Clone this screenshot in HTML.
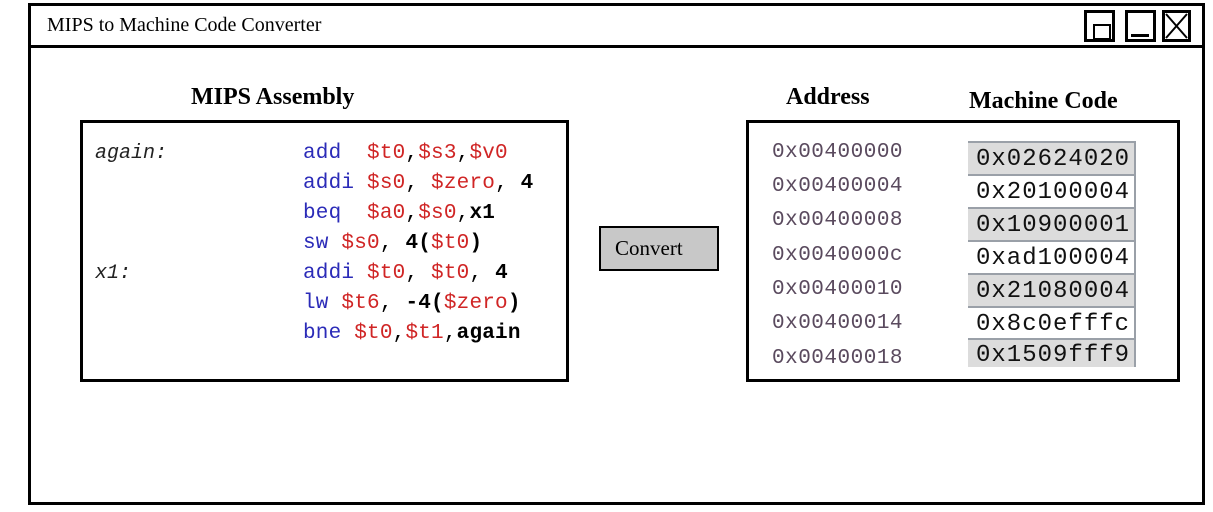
<!DOCTYPE html>
<html><head><style>
body{margin:0;width:1213px;height:512px;background:#fff;position:relative;overflow:hidden;font-family:"Liberation Serif",serif}
.a{position:absolute}
.mono{font-family:"Liberation Mono",monospace}
.b{color:#2b2bb8}.r{color:#d02525}.k{color:#000;font-weight:bold}
.cell{position:absolute;left:968px;width:168px;height:31px;border-top:2px solid #9aa0a8;border-right:2px solid #9aa0a8;font-family:"Liberation Mono",monospace;font-size:24px;line-height:33px;padding-left:8px;box-sizing:border-box;color:#111;letter-spacing:1px;overflow:hidden;white-space:nowrap}
.g{background:#dcdcdc}
.addr{position:absolute;left:772px;font-family:"Liberation Mono",monospace;font-size:21px;color:#5a4a5e;letter-spacing:0.5px}
</style></head><body>
<div class="a" style="left:28px;top:3px;width:1177px;height:502px;border:3px solid #000;box-sizing:border-box"></div>
<div class="a" style="left:28px;top:45px;width:1177px;height:3px;background:#000"></div>
<div class="a" style="left:47px;top:14px;font-size:20px">MIPS to Machine Code Converter</div>
<div class="a" style="left:1084px;top:10px;width:31px;height:32px;border:3px solid #000;box-sizing:border-box"><div class="a" style="left:6px;top:11px;width:14px;height:12px;border:2px solid #000"></div></div>
<div class="a" style="left:1125px;top:10px;width:31px;height:32px;border:3px solid #000;box-sizing:border-box"><div class="a" style="left:3px;top:21px;width:18px;height:3px;background:#000"></div></div>
<div class="a" style="left:1162px;top:10px;width:29px;height:32px;border:3px solid #000;box-sizing:border-box"><svg class="a" style="left:0;top:0" width="23" height="26"><path d="M1 1 L22 25 M22 1 L1 25" stroke="#000" stroke-width="2"/></svg></div>

<div class="a" style="left:191px;top:84px;font-size:24px;font-weight:bold">MIPS Assembly</div>
<div class="a" style="left:786px;top:84px;font-size:24px;font-weight:bold">Address</div>
<div class="a" style="left:969px;top:88px;font-size:24px;font-weight:bold">Machine Code</div>

<div class="a" style="left:80px;top:120px;width:489px;height:262px;border:3px solid #000;box-sizing:border-box"></div>
<div class="a mono" style="left:95px;top:139px;font-size:20px;line-height:30px;font-style:italic;color:#222">again:<br><br><br><br>x1:</div>
<div class="a mono" style="left:303px;top:139px;font-size:21px;line-height:30px;white-space:pre;letter-spacing:0.2px"><span class="b">add</span>  <span class="r">$t0</span>,<span class="r">$s3</span>,<span class="r">$v0</span>
<span class="b">addi</span> <span class="r">$s0</span>, <span class="r">$zero</span>, <span class="k">4</span>
<span class="b">beq</span>  <span class="r">$a0</span>,<span class="r">$s0</span>,<span class="k">x1</span>
<span class="b">sw</span> <span class="r">$s0</span>, <span class="k">4(</span><span class="r">$t0</span><span class="k">)</span>
<span class="b">addi</span> <span class="r">$t0</span>, <span class="r">$t0</span>, <span class="k">4</span>
<span class="b">lw</span> <span class="r">$t6</span>, <span class="k">-4(</span><span class="r">$zero</span><span class="k">)</span>
<span class="b">bne</span> <span class="r">$t0</span>,<span class="r">$t1</span>,<span class="k">again</span></div>

<div class="a" style="left:599px;top:226px;width:120px;height:45px;background:#c8c8c8;border:2px solid #000;box-sizing:border-box;font-size:21px;line-height:41px;padding-left:14px">Convert</div>

<div class="a" style="left:746px;top:120px;width:434px;height:262px;border:3px solid #000;box-sizing:border-box"></div>
<div class="addr" style="top:141px">0x00400000</div>
<div class="addr" style="top:175px">0x00400004</div>
<div class="addr" style="top:209px">0x00400008</div>
<div class="addr" style="top:244px">0x0040000c</div>
<div class="addr" style="top:278px">0x00400010</div>
<div class="addr" style="top:312px">0x00400014</div>
<div class="addr" style="top:347px">0x00400018</div>

<div class="cell g" style="top:141px;height:33px">0x02624020</div>
<div class="cell" style="top:174px;height:33px">0x20100004</div>
<div class="cell g" style="top:207px;height:33px">0x10900001</div>
<div class="cell" style="top:240px;height:33px">0xad100004</div>
<div class="cell g" style="top:273px;height:33px">0x21080004</div>
<div class="cell" style="top:306px;height:32px">0x8c0efffc</div>
<div class="cell g" style="top:338px;height:29px;line-height:31px">0x1509fff9</div>
</body></html>
